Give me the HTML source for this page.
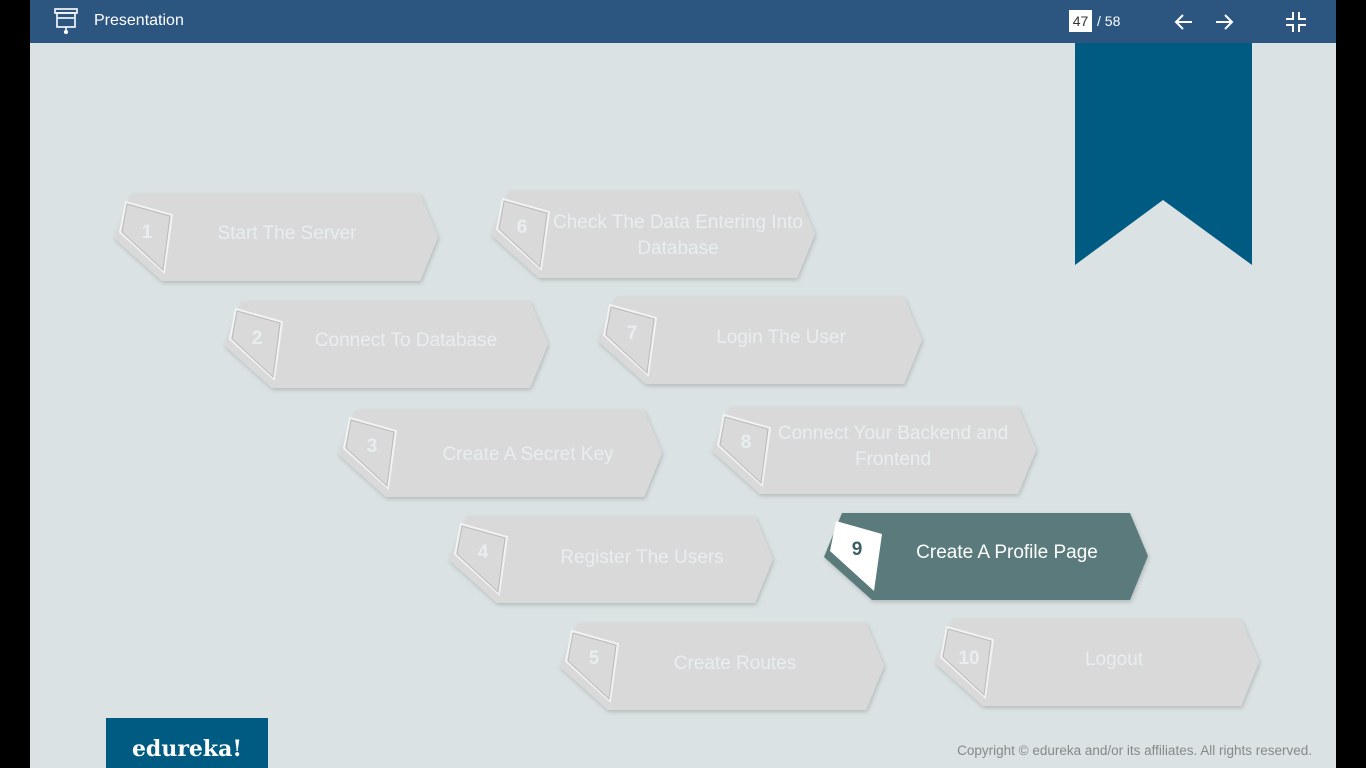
<!DOCTYPE html>
<html><head><style>
html,body{margin:0;padding:0;width:1366px;height:768px;overflow:hidden;background:#000;font-family:"Liberation Sans",sans-serif}
#main{position:absolute;left:30px;top:0;width:1306px;height:768px;background:#dae2e3}
#bar{position:absolute;left:30px;top:0;width:1306px;height:43px;background:#2c5680;color:#fff}
</style></head><body>
<div id="main"></div>
<div id="bar">
<svg style="position:absolute;left:24px;top:8px" width="26" height="26" viewBox="0 0 26 26" fill="none" stroke="#fff" stroke-width="1.6"><rect x="1" y="1" width="22" height="4"/><rect x="3" y="5" width="18" height="14"/><line x1="4" y1="10" x2="20" y2="10"/><line x1="12" y1="19" x2="12" y2="23"/><circle cx="12" cy="24" r="1.3" fill="#fff"/></svg>
<div style="position:absolute;left:64px;top:12px;font-size:16px">Presentation</div>
<div style="position:absolute;left:1039px;top:10px;width:23px;height:22px;background:#fff;color:#333;font-size:14px;text-align:center;line-height:22px">47</div>
<div style="position:absolute;left:1067px;top:13px;font-size:14px">/ 58</div>
<svg style="position:absolute;left:1142px;top:12px" width="80" height="20" viewBox="0 0 80 20" fill="none" stroke="#fff" stroke-width="2"><path d="M20 10H4M11 3L4 10L11 17"/><path d="M44 10H60M53 3L60 10L53 17"/></svg>
<svg style="position:absolute;left:1255px;top:11px" width="22" height="22" viewBox="0 0 22 22" fill="none" stroke="#fff" stroke-width="2"><path d="M8 1V8H1M14 1V8H21M8 21V14H1M14 21V14H21"/></svg>
</div>
<svg style="position:absolute;left:0;top:0" width="1366" height="768">
<defs>
<filter id="sh" x="-10%" y="-10%" width="125%" height="130%"><feDropShadow dx="1" dy="2" stdDeviation="2" flood-color="#000" flood-opacity="0.18"/></filter>
<g id="shape"><polygon points="18,1 306,1 324,44 306,88 48,88 0,45" filter="url(#sh)"/></g>
<g id="kite"><polygon points="12,9 58,22 50,79 6,39" fill="none" stroke="#f2f2f2" stroke-width="2"/><polygon points="13,11 56,23 49,77 8,39" fill="none" stroke="#bbb" stroke-width="1"/></g>
</defs>
<polygon points="1075,43 1252,43 1252,265 1163,200 1075,265" fill="#005b82"/>
<g fill="#d9d9d9">
<use href="#shape" x="114" y="193"/><use href="#shape" x="491" y="190"/>
<use href="#shape" x="224" y="300"/><use href="#shape" x="598" y="296"/>
<use href="#shape" x="338" y="409"/><use href="#shape" x="712" y="406"/>
<use href="#shape" x="449" y="515"/><use href="#shape" x="560" y="622"/>
<use href="#shape" x="935" y="618"/>
</g>
<use href="#shape" x="824" y="512" fill="#5a7a7b"/>
<use href="#kite" x="114" y="193"/><use href="#kite" x="491" y="190"/>
<use href="#kite" x="224" y="300"/><use href="#kite" x="598" y="296"/>
<use href="#kite" x="338" y="409"/><use href="#kite" x="712" y="406"/>
<use href="#kite" x="449" y="515"/><use href="#kite" x="560" y="622"/>
<use href="#kite" x="935" y="618"/>
<polygon points="836,521 882,534 874,591 830,551" fill="#fff"/>
<g font-family="Liberation Sans,sans-serif" font-size="19" fill="#e8eef0" text-anchor="middle">
<g font-weight="bold" font-size="19">
<text x="147" y="238">1</text><text x="522" y="233">6</text><text x="257" y="344">2</text><text x="632" y="339">7</text><text x="372" y="452">3</text><text x="746" y="448">8</text><text x="483" y="558">4</text><text x="594" y="664">5</text><text x="969" y="664">10</text>
<text x="857" y="555" fill="#3d5f66">9</text></g>
<text x="287" y="239">Start The Server</text>
<text x="678" y="228">Check The Data Entering Into</text><text x="678" y="254">Database</text>
<text x="406" y="346">Connect To Database</text>
<text x="781" y="343">Login The User</text>
<text x="528" y="460">Create A Secret Key</text>
<text x="893" y="439">Connect Your Backend and</text><text x="893" y="465">Frontend</text>
<text x="642" y="563">Register The Users</text>
<text x="1007" y="558" fill="#fff">Create A Profile Page</text>
<text x="735" y="669">Create Routes</text>
<text x="1114" y="665">Logout</text>
</g>
<rect x="106" y="718" width="162" height="50" fill="#005b82"/>
<text x="187" y="756" text-anchor="middle" font-family="DejaVu Serif,serif" font-weight="bold" font-size="22" fill="#fff">edureka!</text>
<text x="1312" y="755" text-anchor="end" font-family="Liberation Sans,sans-serif" font-size="13.5" fill="#888">Copyright © edureka and/or its affiliates. All rights reserved.</text>
</svg>
</body></html>
